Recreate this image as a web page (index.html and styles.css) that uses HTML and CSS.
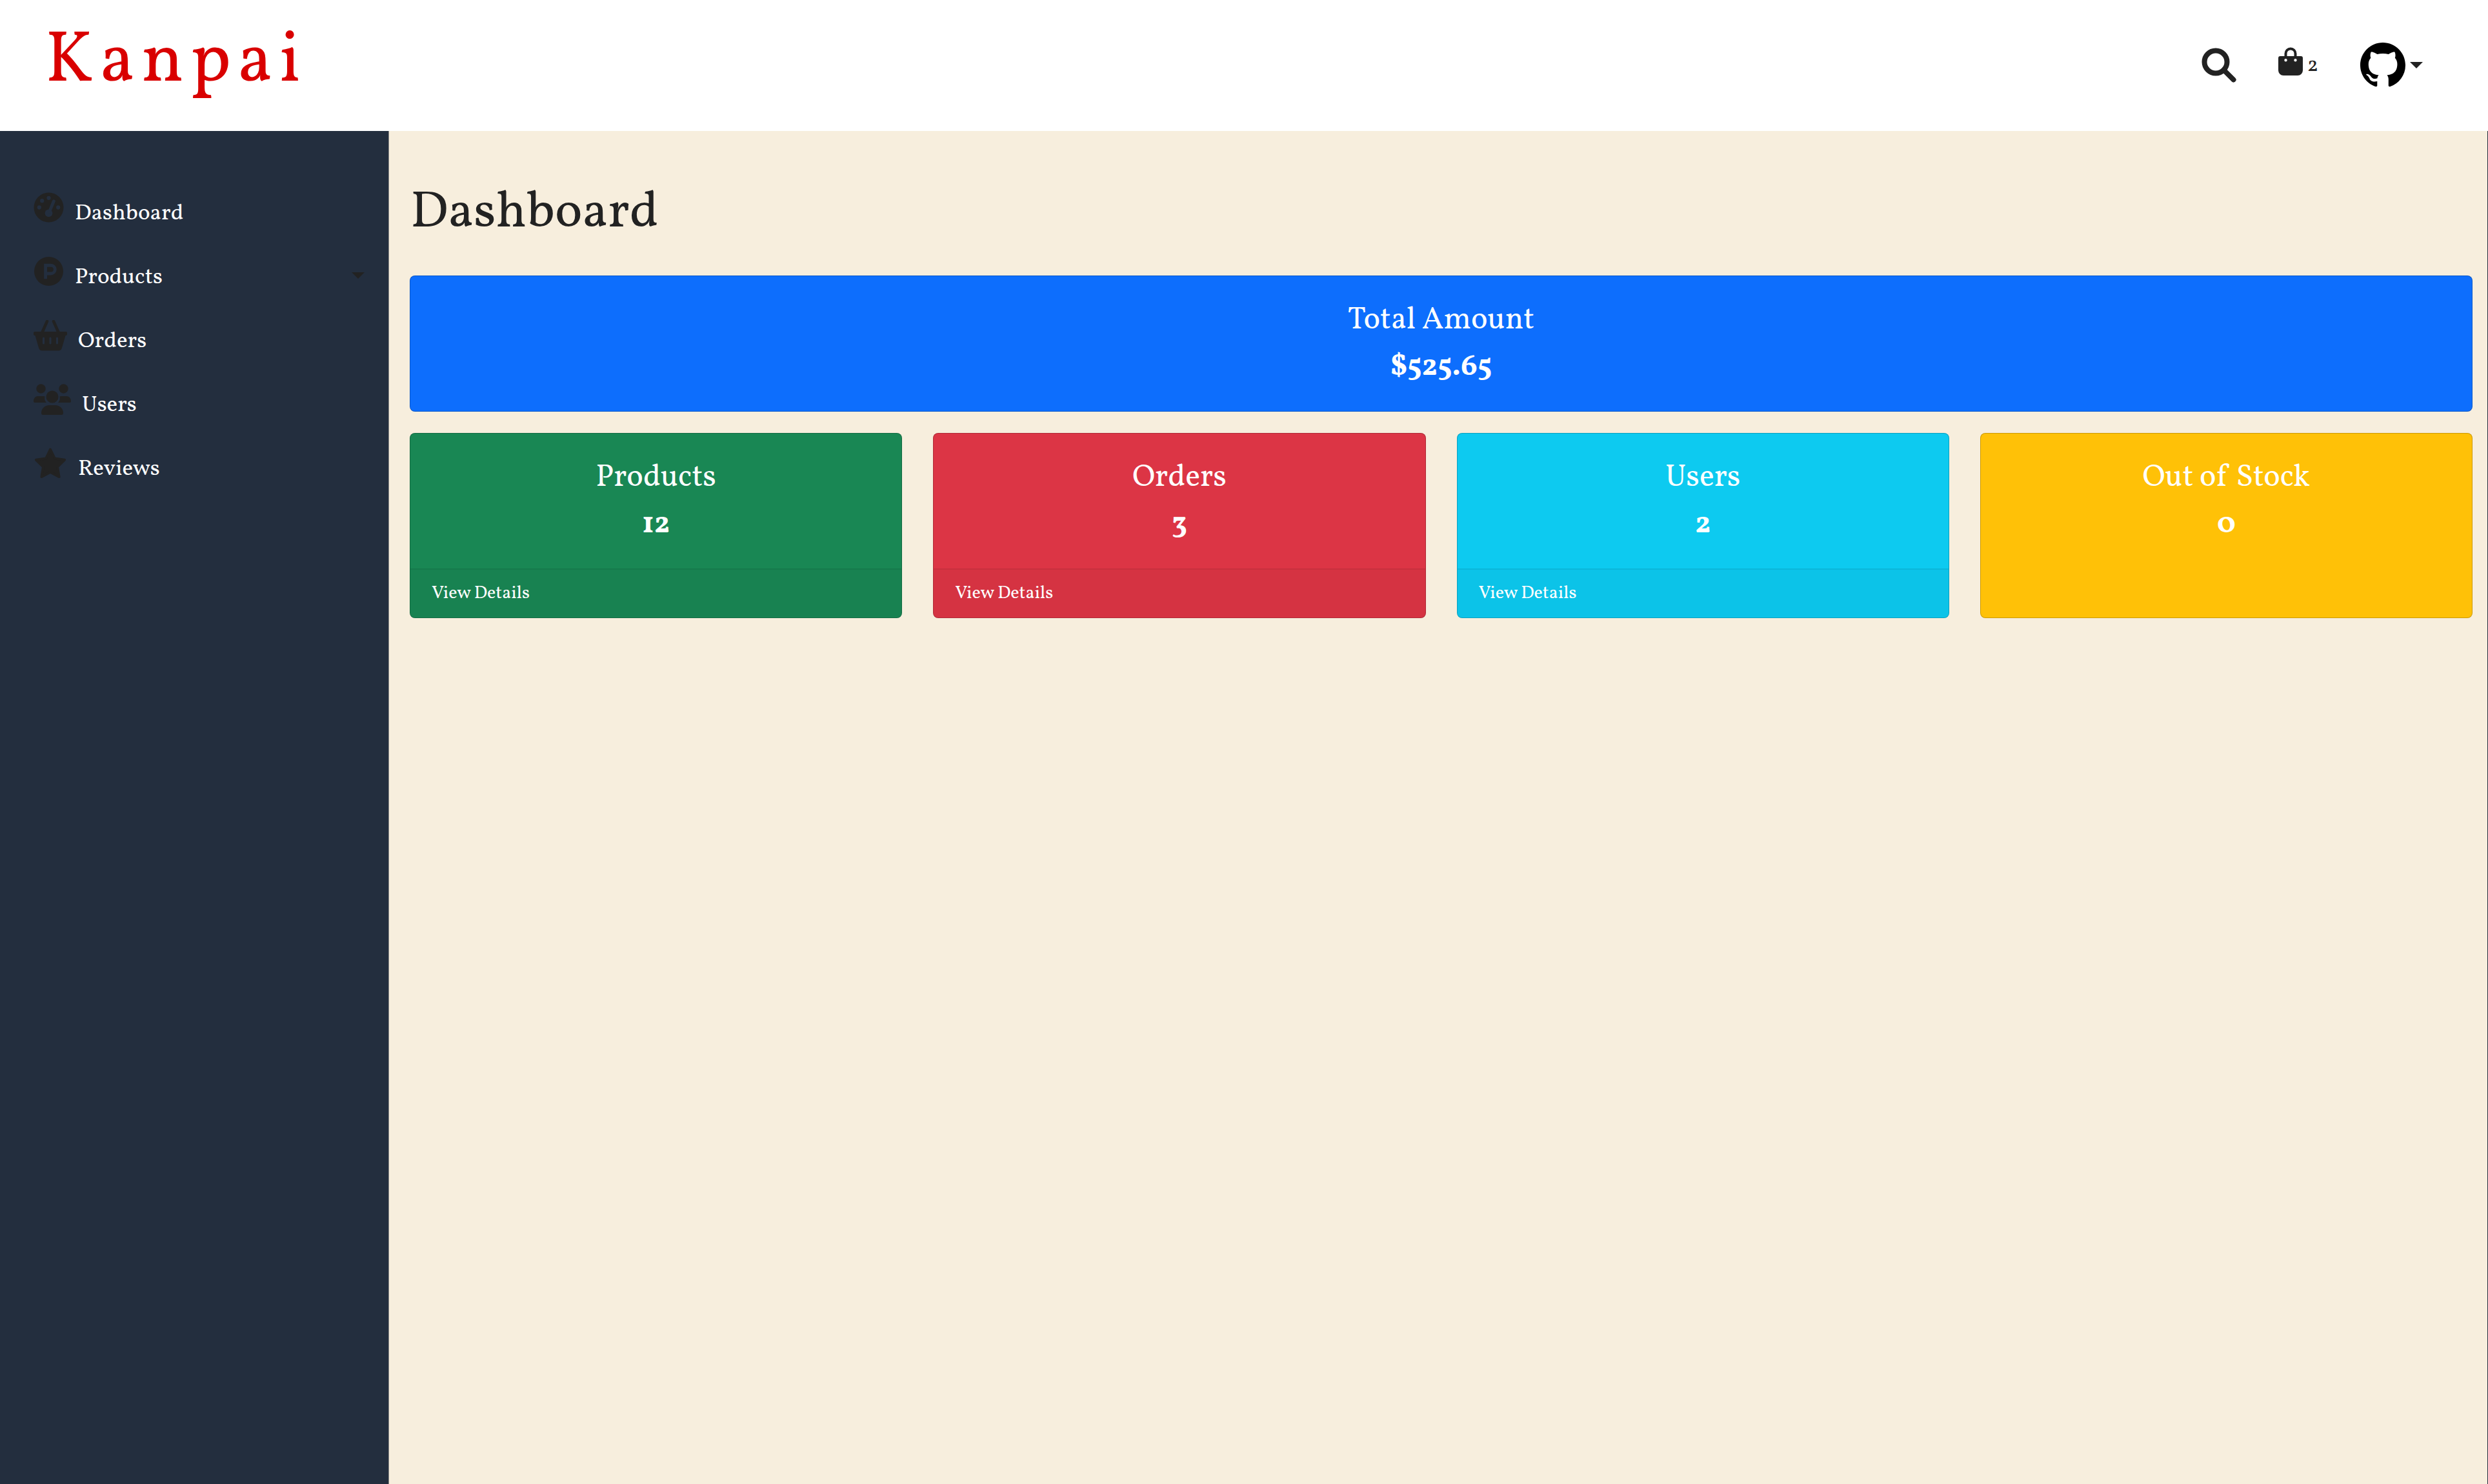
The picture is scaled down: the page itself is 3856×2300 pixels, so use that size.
FILE: index.html
```html
<!DOCTYPE html>
<html lang="en">
<head>
<meta charset="utf-8">
<title>Kanpai Dashboard</title>
<link rel="stylesheet" href="styles.css">
</head>
<body>
<header class="topbar">
  <a class="brand" href="#">Kanpai</a>
  <nav class="tools" aria-label="Account">
    <button class="tool" type="button" aria-label="Search">
      <svg class="icon-search" viewBox="0 0 54 54"><circle cx="22" cy="22" r="17.500" fill="none" stroke="currentColor" stroke-width="8"/><path d="M35 35 49.500 49.500" fill="none" stroke="currentColor" stroke-width="8" stroke-linecap="round"/></svg>
    </button>
    <a class="tool cart" href="#" aria-label="Shopping bag, 2 items">
      <svg class="icon-bag" viewBox="0 0 38 44"><path d="M11.500 16V10a7.500 7.500 0 0 1 15 0v6" fill="none" stroke="currentColor" stroke-width="4"/><path fill="currentColor" fill-rule="evenodd" d="M3 14h32a3 3 0 0 1 3 3v19a8 8 0 0 1-8 8H8a8 8 0 0 1-8-8V17a3 3 0 0 1 3-3zM11.500 18a2.200 2.200 0 1 0 0 4.400 2.200 2.200 0 0 0 0-4.400zM26.500 18a2.200 2.200 0 1 0 0 4.400 2.200 2.200 0 0 0 0-4.400z"/></svg>
      <span class="cart-count">2</span>
    </a>
    <button class="tool profile" type="button" aria-label="Profile menu">
      <svg class="icon-github" viewBox="0 0 16 16"><path d="M8 0C3.58 0 0 3.58 0 8c0 3.540 2.290 6.530 5.470 7.590.4.070.55-.17.55-.38 0-.19-.010-.82-.010-1.490-2.010.37-2.530-.49-2.690-.94-.090-.23-.48-.94-.82-1.130-.28-.15-.68-.52-.010-.53.63-.010 1.080.58 1.230.82.72 1.210 1.870.87 2.330.66.070-.52.28-.87.510-1.070-1.780-.2-3.640-.89-3.640-3.950 0-.87.310-1.590.82-2.150-.080-.2-.36-1.020.080-2.120 0 0 .67-.21 2.200.82.64-.18 1.320-.27 2-.27s1.360.090 2 .27c1.530-1.040 2.200-.82 2.200-.82.44 1.100.16 1.920.080 2.120.510.56.82 1.270.82 2.150 0 3.070-1.870 3.750-3.650 3.950.29.25.54.73.54 1.480 0 1.070-.010 1.930-.010 2.200 0 .21.15.46.55.38A8.010 8.010 0 0 0 16 8c0-4.420-3.580-8-8-8z"/></svg>
      <span class="caret"></span>
    </button>
  </nav>
</header>
<div class="layout">
  <nav class="sidebar" aria-label="Main">
    <a class="nav-item" href="#">
      <svg class="icon-round" viewBox="0 0 48 48"><circle cx="24" cy="24" r="23.500" fill="currentColor"/><g class="cut"><circle cx="24" cy="9" r="3.200"/><circle cx="13.500" cy="13.500" r="3.200"/><circle cx="9" cy="24" r="3.200"/><circle cx="39" cy="24" r="3.200"/><circle cx="24" cy="33" r="6"/></g><path class="cut-line" stroke-linecap="round" d="M25 31 32 14"/></svg>
      <span class="nav-label">Dashboard</span>
    </a>
    <a class="nav-item" href="#">
      <svg class="icon-round" viewBox="0 0 48 48"><circle cx="24" cy="24" r="23" fill="currentColor"/><path d="M19 36V14.500h8.500a6.500 6.500 0 0 1 0 13H19" class="cut-line"/></svg>
      <span class="nav-label">Products</span>
      <span class="caret caret-end"></span>
    </a>
    <a class="nav-item" href="#">
      <svg class="icon-wide" viewBox="0 0 52 48"><path d="M21 2 13 20M31 2 39 20" fill="none" stroke="currentColor" stroke-width="4.500" stroke-linecap="round"/><path fill="currentColor" fill-rule="evenodd" d="M2.500 18h47a2.500 2.500 0 0 1 0 6l-5.500 19a6 6 0 0 1-6 4.500H14A6 6 0 0 1 8 43L2.500 24a2.500 2.500 0 0 1 0-6zM14 28v8a1.500 1.500 0 0 0 3 0v-8a1.500 1.500 0 0 0-3 0zM24.500 28v8a1.500 1.500 0 0 0 3 0v-8a1.500 1.500 0 0 0-3 0zM35 28v8a1.500 1.500 0 0 0 3 0v-8a1.500 1.500 0 0 0-3 0z"/></svg>
      <span class="nav-label">Orders</span>
    </a>
    <a class="nav-item" href="#">
      <svg class="icon-users" viewBox="0 0 58 48"><g fill="currentColor"><circle cx="11.500" cy="7.500" r="7.200"/><circle cx="46.500" cy="7.500" r="7.200"/><circle cx="29" cy="20" r="9.500"/><path d="M7 19h8.500l2 .5c-1 4 0 7 2.500 9.500H2c-1.300 0-2-.700-2-2 0-4.500 3-8 7-8zM51 19h-8.500l-2 .5c1 4 0 7-2.500 9.500h18c1.300 0 2-.700 2-2 0-4.500-3-8-7-8zM24.500 33h9c7 0 12.500 5 12.500 12 0 1.800-1 3-2.500 3h-29c-1.500 0-2.500-1.200-2.500-3 0-7 5.500-12 12.500-12z"/></g></svg>
      <span class="nav-label">Users</span>
    </a>
    <a class="nav-item" href="#">
      <svg class="icon-wide" viewBox="0 0 52 48"><path d="M26 2.500l6.800 14 15.200 2.200L37 29.500 39.600 45 26 37.700 12.400 45 15 29.500 4 18.700l15.200-2.200z" fill="currentColor" stroke="currentColor" stroke-width="4" stroke-linejoin="round"/></svg>
      <span class="nav-label">Reviews</span>
    </a>
  </nav>
  <main class="content">
    <h1 class="page-title">Dashboard</h1>
    <section class="card card-total">
      <div class="card-body"><h2 class="card-title">Total Amount</h2><p class="card-value">$525.65</p></div>
    </section>
    <div class="card-grid">
      <section class="card card-products">
        <div class="card-body"><h2 class="card-title">Products</h2><p class="card-value">12</p></div>
        <a class="card-footer" href="#">View Details</a>
      </section>
      <section class="card card-orders">
        <div class="card-body"><h2 class="card-title">Orders</h2><p class="card-value">3</p></div>
        <a class="card-footer" href="#">View Details</a>
      </section>
      <section class="card card-users">
        <div class="card-body"><h2 class="card-title">Users</h2><p class="card-value">2</p></div>
        <a class="card-footer" href="#">View Details</a>
      </section>
      <section class="card card-stock">
        <div class="card-body"><h2 class="card-title">Out of Stock</h2><p class="card-value">0</p></div>
      </section>
    </div>
  </main>
</div>
</body>
</html>
```

FILE: styles.css
```css
* {
  box-sizing: border-box;
}

body {
  margin: 0;
  min-height: 100vh;
  display: flex;
  flex-direction: column;
  color: #222;
  background: #fff;
  font-family: Vollkorn, "Liberation Serif", serif;
  font-size: 35px;
}

a {
  color: inherit;
  text-decoration: none;
}

button {
  border: 0;
  padding: 0;
  background: none;
  color: inherit;
  font: inherit;
}

svg {
  display: block;
  flex: none;
}

.topbar {
  display: flex;
  align-items: center;
  justify-content: space-between;
  padding: 28px 101px 36px 70px;
}

.brand {
  color: #d90000;
  font-size: 110px;
  line-height: 139px;
  letter-spacing: 10px;
}

.tools {
  display: flex;
  align-items: center;
  gap: 65px;
  padding-top: 7px;
}

.tool {
  display: flex;
  align-items: center;
}

.cart {
  gap: 7px;
  padding-bottom: 12px;
}

.cart-count {
  font-size: 32px;
  line-height: 30px;
  padding-top: 14px;
}

.profile {
  gap: 7px;
}

.icon-search {
  width: 54px;
  height: 54px;
}

.icon-bag {
  width: 38px;
  height: 44px;
}

.icon-github {
  width: 70px;
  height: 70px;
  color: #000;
}

.caret {
  border: 10px solid transparent;
  border-top-color: #222;
  border-bottom: 0;
}

.layout {
  flex: 1;
  display: grid;
  grid-template-columns: 603px 1fr;
}

.sidebar {
  padding: 69px 37px 0 52px;
  background: #232e3e;
  border-right: 1px solid #8a8a88;
}

.nav-item {
  display: flex;
  align-items: center;
  gap: 17px;
  height: 99px;
  color: #222;
}

.nav-label {
  padding-top: 19px;
  color: #fff;
}

.caret-end {
  margin-left: auto;
  margin-top: 12px;
}

.icon-round {
  width: 47px;
  height: 47px;
}

.icon-wide {
  width: 52px;
  height: 48px;
}

.icon-users {
  width: 58px;
  height: 48px;
}

.cut {
  fill: #232e3e;
}

.cut-line {
  fill: none;
  stroke: #232e3e;
  stroke-width: 5px;
}

.content {
  padding: 78px 23px 78px 32px;
  background: #f7eedd;
  border-right: 1px solid #232e3e;
}

.page-title {
  margin: 0 0 46px 1px;
  font-size: 80px;
  font-weight: 400;
  line-height: 100px;
}

.card {
  display: flex;
  flex-direction: column;
  overflow: hidden;
  border: 1px solid rgba(0, 0, 0, 0.2);
  border-radius: 8px;
  color: #fff;
}

.card-body {
  flex: 1;
  padding: 32px;
  text-align: center;
}

.card-title,
.card-value {
  margin: 0;
}

.card-title {
  font-size: 48px;
  font-weight: 400;
  line-height: 73px;
}

.card-value {
  font-size: 47px;
  font-weight: 700;
  line-height: 72px;
}

.card-footer {
  padding: 16px 33px;
  border-top: 2px solid rgba(0, 0, 0, 0.06);
  background: rgba(0, 0, 0, 0.03);
  font-size: 28px;
  line-height: 42px;
}

.card-grid {
  display: grid;
  grid-template-columns: repeat(4, 1fr);
  gap: 48px;
  margin-top: 33px;
}

.card-total {
  background: #0d6efd;
}

.card-products {
  background: #198754;
}

.card-orders {
  background: #dc3545;
}

.card-users {
  background: #0dcaf0;
}

.card-stock {
  background: #ffc107;
}
```
